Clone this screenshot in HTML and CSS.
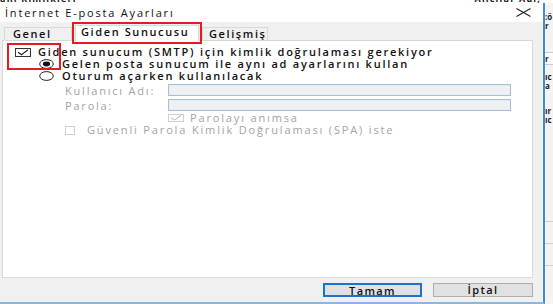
FILE: index.html
```html
<!DOCTYPE html>
<html lang="tr">
<head>
<meta charset="utf-8">
<title>İnternet E-posta Ayarları</title>
<link rel="stylesheet" href="styles.css">
</head>
<body>
<div class="screen">
  <div class="topstrip">
    <span class="bgtext bg-left">anı Kimlikleri</span>
    <span class="bgtext bg-right">Alıcılar Adı,</span>
  </div>
  <div class="row">
    <div class="dialog">
      <div class="titlebar">
        <span class="title">İnternet E-posta Ayarları</span>
        <svg class="close" width="15" height="9" viewBox="0 0 15 9"><path d="M0.5 0.5 L14.5 8.5 M14.5 0.5 L0.5 8.5" stroke="#222" stroke-width="1.1" fill="none"/></svg>
      </div>
      <div class="body">
        <div class="tabs">
          <div class="tab t-genel">Genel</div>
          <div class="tab selected">Giden Sunucusu</div>
          <div class="tab t-gelismis">Gelişmiş</div>
        </div>
        <div class="panel">
          <div class="annot-check"></div>
          <div class="line l1">
            <span class="cb">
              <svg width="16" height="9" viewBox="0 0 16 9"><rect x="0.5" y="0.5" width="15" height="8" fill="#fff" stroke="#333"/><path d="M3 4.2 L6.5 6.8 L13 1.8" stroke="#222" stroke-width="1.1" fill="none"/></svg>
            </span>
            <span class="txt strong">Giden sunucum (SMTP) için kimlik doğrulaması gerekiyor</span>
          </div>
          <div class="line l2">
            <span class="rb">
              <svg width="15" height="10" viewBox="0 0 15 10"><ellipse cx="7.5" cy="5" rx="6.8" ry="4.4" fill="#fff" stroke="#222" stroke-width="1"/><ellipse cx="7.5" cy="5" rx="3.6" ry="2.4" fill="#111"/></svg>
            </span>
            <span class="txt strong">Gelen posta sunucum ile aynı ad ayarlarını kullan</span>
          </div>
          <div class="line l3">
            <span class="rb">
              <svg width="15" height="10" viewBox="0 0 15 10"><ellipse cx="7.5" cy="5" rx="6.8" ry="4.4" fill="#fff" stroke="#222" stroke-width="1"/></svg>
            </span>
            <span class="txt strong">Oturum açarken kullanılacak</span>
          </div>
          <div class="line field f1">
            <span class="lbl">Kullanıcı Adı:</span>
            <span class="input"></span>
          </div>
          <div class="line field f2">
            <span class="lbl">Parola:</span>
            <span class="input"></span>
          </div>
          <div class="line remember">
            <span class="cb dis">
              <svg width="16" height="8" viewBox="0 0 16 8"><rect x="0.5" y="0.5" width="15" height="7" fill="#fff" stroke="#cfcfcf"/><path d="M3 3.8 L6.5 6 L13 1.5" stroke="#b5b5b5" stroke-width="1" fill="none"/></svg>
            </span>
            <span class="txt dim">Parolayı anımsa</span>
          </div>
          <div class="line spa">
            <span class="cb dis">
              <svg width="10" height="9" viewBox="0 0 10 9"><rect x="0.5" y="0.5" width="9" height="8" fill="#fff" stroke="#cfcfcf"/></svg>
            </span>
            <span class="txt dim">Güvenli Parola Kimlik Doğrulaması (SPA) iste</span>
          </div>
        </div>
        <div class="buttons">
          <button class="btn default">Tamam</button>
          <button class="btn">İptal</button>
        </div>
      </div>
    </div>
    <div class="behind">
      <span class="frag f-a">:ö</span>
      <span class="frag f-b">r</span>
      <span class="frag boxed">r</span>
      <span class="frag f-c">ıc</span>
      <span class="frag f-c2">a</span>
      <span class="frag f-d">ır</span>
      <span class="frag f-d2">ıc</span>
      <span class="sep s1"></span>
      <span class="sep s2"></span>
      <span class="sep s3"></span>
    </div>
  </div>
</div>
</body>
</html>
```

FILE: styles.css
```css
* { box-sizing: border-box; }
html, body { margin: 0; padding: 0; }
body {
  width: 553px;
  height: 304px;
  overflow: hidden;
  background: #f0f0f0;
  font-family: "Open Sans", "DejaVu Sans", sans-serif;
  font-size: 11px;
  color: #000;
}
.screen { display: flex; flex-direction: column; height: 304px; }

.topstrip {
  height: 3px;
  overflow: hidden;
  background: #fff;
  display: flex;
  justify-content: space-between;
  align-items: flex-start;
}
.bgtext {
  font-weight: 700;
  font-size: 9px;
  line-height: 3px;
  margin-top: -3px;
  color: #1a1a1a;
  letter-spacing: 1.2px;
  white-space: nowrap;
}
.bg-right { margin-right: 12px; }

.row { display: flex; height: 301px; }

.dialog {
  width: 545px;
  display: flex;
  flex-direction: column;
  border-right: 2px solid #3f8bd6;
  border-bottom: 2px solid #8ab6e0;
}
.titlebar {
  height: 19px;
  background: #fff;
  display: flex;
  align-items: center;
  justify-content: space-between;
  padding: 0 12px 0 5px;
}
.title { letter-spacing: 1.8px; color: #111; white-space: nowrap; line-height: 12px; }
.close { display: block; }

.body {
  flex: 1;
  background: #f0f0f0;
  display: flex;
  flex-direction: column;
}

.tabs {
  height: 18px;
  display: flex;
  align-items: flex-end;
  padding-left: 4px;
}
.tab {
  height: 13px;
  border: 1px solid #d9d9d9;
  border-bottom: none;
  background: #f0f0f0;
  font-weight: 600;
  letter-spacing: 1.6px;
  line-height: 12px;
  white-space: nowrap;
  color: #111;
}
.t-genel { width: 68px; padding-left: 8px; }
.selected {
  position: relative;
  z-index: 2;
  height: 16px;
  width: 124px;
  margin: 0 3px -1px 3px;
  background: #fff;
  padding-left: 5px;
  line-height: 12px;
  outline: 2px solid #e31b23;
  outline-offset: 1px;
}
.t-gelismis { width: 66px; padding-left: 6px; }

.panel {
  position: relative;
  margin-left: 2px;
  width: 531px;
  height: 238px;
  background: #fff;
  border: 1px solid #d9d9d9;
  padding-top: 5px;
}
.annot-check {
  position: absolute;
  left: 4px;
  top: 2px;
  width: 54px;
  height: 27px;
  border: 2px solid #e31b23;
}

.line { display: flex; align-items: center; height: 12px; }
.txt { line-height: 12px; white-space: nowrap; }
.strong { font-weight: 600; letter-spacing: 1.75px; color: #111; }
.dim { color: #a3a3a3; letter-spacing: 1.85px; }
.cb svg, .rb svg { display: block; }

.l1 { padding-left: 12px; }
.l1 .cb { margin-right: 7px; }
.l2 { padding-left: 36px; }
.l3 { padding-left: 36px; }
.rb { margin-right: 8px; }

.field { padding-left: 62px; margin-top: 2px; }
.f2 { margin-top: 3px; }
.lbl { width: 103px; color: #a3a3a3; letter-spacing: 1.8px; white-space: nowrap; }
.input {
  width: 343px;
  height: 12px;
  background: #f0f0f0;
  border: 1px solid #a9bfd8;
  box-shadow: inset 0 0 0 1px #e6ecf3;
}

.remember { margin-top: 1px; padding-left: 165px; }
.remember .cb { margin-right: 6px; }
.spa { padding-left: 62px; }
.spa .cb { margin-right: 12px; }

.buttons {
  display: flex;
  padding: 5px 0 0 323px;
  gap: 11px;
}
.btn {
  width: 100px;
  height: 14px;
  padding: 0;
  font-family: "Open Sans", "DejaVu Sans", sans-serif;
  font-size: 11px;
  font-weight: 600;
  letter-spacing: 1.4px;
  line-height: 12px;
  color: #111;
  background: #e1e1e1;
  border: 1px solid #adadad;
}
.btn.default { border: 2px solid #1a73d0; width: 99px; }

.behind {
  position: relative;
  flex: 1;
  background: #f3f3f3;
  overflow: hidden;
}
.frag {
  position: absolute;
  left: 0;
  font-size: 8px;
  font-weight: 700;
  line-height: 8px;
  color: #1a1a1a;
}
.f-a { top: 10px; }
.f-b { top: 19px; }
.boxed { top: 49px; height: 13px; width: 8px; background: #fafafa; border-top: 1px solid #ccc; border-bottom: 1px solid #ccc; padding-top: 2px; }
.f-c { top: 70px; }
.f-c2 { top: 79px; }
.f-d { top: 104px; }
.f-d2 { top: 113px; }
.sep { position: absolute; left: 0; width: 8px; height: 1px; background: #cfcfcf; }
.s1 { top: 218px; }
.s2 { top: 240px; }
.s3 { top: 262px; }
```
